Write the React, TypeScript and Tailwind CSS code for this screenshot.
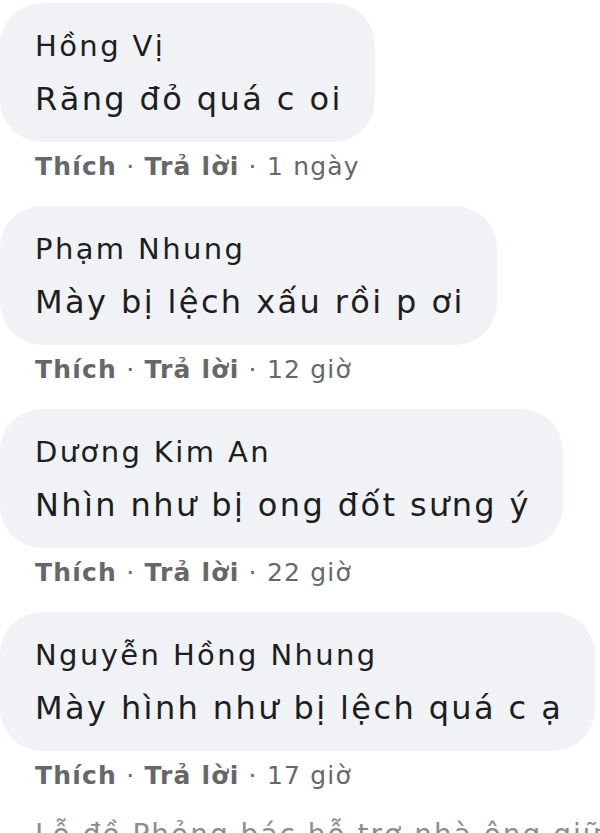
import React from "react";

const comments = [
  { name: "Hồng Vị", text: "Răng đỏ quá c oi", time: "1 ngày" },
  { name: "Phạm Nhung", text: "Mày bị lệch xấu rồi p ơi", time: "12 giờ" },
  { name: "Dương Kim An", text: "Nhìn như bị ong đốt sưng ý", time: "22 giờ" },
  { name: "Nguyễn Hồng Nhung", text: "Mày hình như bị lệch quá c ạ", time: "17 giờ" },
];

export default function App() {
  return (
    <div
      className="w-[600px] h-[833px] overflow-hidden bg-white pt-[3px]"
      style={{ fontFamily: '"DejaVu Sans", "Noto Sans", sans-serif' }}
    >
      {comments.map((c) => (
        <div key={c.name} className="mb-[16px]">
          <div className="inline-flex flex-col rounded-[42px] bg-[#f0f2f5] pl-[35px] pr-[32px] pt-[20px] pb-[13px]">
            <div className="text-[29px] leading-[46px] tracking-[2.4px] text-[#1c1e21] whitespace-nowrap">{c.name}</div>
            <div className="text-[32px] leading-[60px] tracking-[2.4px] text-[#1c1e21] whitespace-nowrap">{c.text}</div>
          </div>
          <div className="mt-[2px] pl-[35px] text-[25px] leading-[46px] tracking-[1.2px] text-[#65676b] whitespace-nowrap">
            <span className="font-bold">Thích</span>
            <span> · </span>
            <span className="font-bold">Trả lời</span>
            <span> · {c.time}</span>
          </div>
        </div>
      ))}
      <div className="pl-[35px] text-[28px] leading-[40px] tracking-[2px] text-[#8a8d91] whitespace-nowrap">
        Lỗ đồ Phỏng bác hỗ trợ nhà ông giữ bình luận
      </div>
    </div>
  );
}
